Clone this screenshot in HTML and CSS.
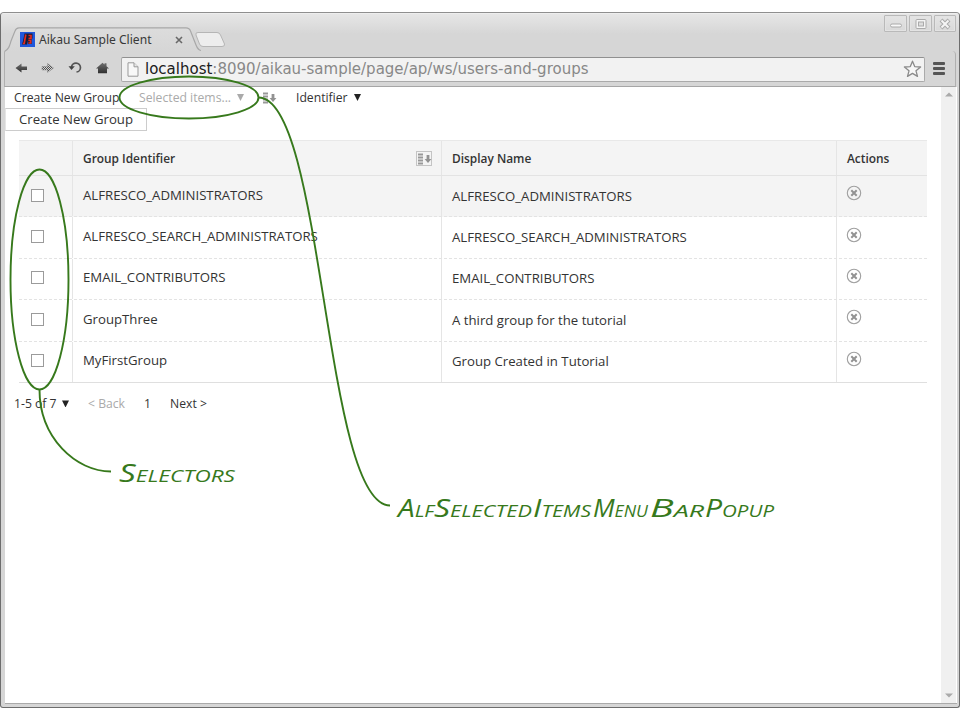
FILE: index.html
```html
<!DOCTYPE html>
<html lang="en">
<head>
<meta charset="utf-8">
<title>Aikau Sample Client</title>
<link rel="stylesheet" href="styles.css">
</head>
<body>
<svg class="defs" width="0" height="0">
  <symbol id="sort" viewBox="0 0 14 12"><path d="M0 1.500h5M0 4.500h5M0 7.500h5M0 10.500h5" stroke="#999" stroke-width="1.800"/><path d="M10 2v5" stroke="#929292" stroke-width="2.800"/><path d="M6.600 6h6.800L10 10z" fill="#929292"/></symbol>
  <symbol id="remove" viewBox="0 0 16 16"><circle cx="8" cy="8" r="6.700" fill="none" stroke="#a0a0a0" stroke-width="1.100"/><path d="M5.300 5.300l5.400 5.400M10.700 5.300l-5.400 5.400" stroke="#929292" stroke-width="2"/></symbol>
</svg>
<div class="window">
  <header class="titlebar">
    <svg class="tabshape" width="230" height="25" viewBox="0 0 230 25">
      <defs><linearGradient id="tg" x1="0" y1="0" x2="0" y2="1"><stop offset="0" stop-color="#dcdcdc"/><stop offset="1" stop-color="#d6d6d6"/></linearGradient></defs>
      <path d="M3.500 24.500C8 22 8.500 19 10 14L14 4Q15 .8 18 .8H185Q188.500 .8 189.500 4L195 18Q197 23 201 23.500V25H3z" fill="url(#tg)"/>
      <path d="M3.500 24.500C8 22 8.500 19 10 14L14 4Q15 .8 18 .8H185Q188.500 .8 189.500 4L195 18Q197 23 200 23.500" fill="none" stroke="#a8a8a8" stroke-width="1.200"/>
      <path d="M195 8Q194 5.500 197 5.500H216Q218.500 5.500 219.500 8L223.500 17Q224 19.500 221 19.500H202Q199.500 19.500 198.500 17z" fill="#ededed" stroke="#b5b5b5"/>
    </svg>
    <div class="tab">
      <svg width="15" height="15" viewBox="0 0 15 15"><rect width="15" height="15" fill="#2158dc"/><path d="M4.500 1.500h8v4.800l-.8 1V12H8V8.500L7 12.500H2L3 9z" fill="#141c38"/><path d="M5.800 2.500L4.200 11.500H2.800M8.500 3.500h2.500v2.800H8.500M8.300 8.500h2.400v2.500H8.300" stroke="#e02b20" stroke-width="1.700" fill="none"/></svg>
      <span class="tabname">Aikau Sample Client</span>
      <svg class="tabclose" width="8" height="8" viewBox="0 0 8 8"><path d="M1 1l6 6M7 1L1 7" stroke="#686868" stroke-width="1.600"/></svg>
    </div>
    <div class="controls">
      <span class="ctl"><svg width="14" height="12"><rect x="1.500" y="6" width="11" height="3" rx="1.500" fill="#f8f8f8" stroke="#aaa"/></svg></span>
      <span class="ctl"><svg width="14" height="12"><rect x="2" y="1.500" width="10" height="9" rx="1" fill="#f4f4f4" stroke="#aaa"/><rect x="4.500" y="4" width="5" height="4" fill="#ddd" stroke="#aaa"/></svg></span>
      <span class="ctl"><svg width="14" height="12"><path d="M3 2l8 8M11 2l-8 8" stroke="#aaa" stroke-width="4"/><path d="M3.500 2.500l7 7M10.500 2.500l-7 7" stroke="#f5f5f5" stroke-width="2"/></svg></span>
    </div>
  </header>
  <nav class="toolbar">
    <svg width="118" height="36" viewBox="0 0 118 36">
      <defs><linearGradient id="ig" x1="0" y1="0" x2="0" y2="1"><stop offset="0" stop-color="#707070"/><stop offset="1" stop-color="#303030"/></linearGradient>
      <pattern id="dots" width="2" height="2" patternUnits="userSpaceOnUse"><rect width="1" height="1" fill="#505050"/><rect x="1" y="1" width="1" height="1" fill="#505050"/></pattern></defs>
      <path d="M10.500 17l6-4.500v3h5.500v3.500h-5.500V21.500z" fill="url(#ig)"/>
      <path d="M48.500 17l-6-4.500v3h-5.500v3.500h5.500V21.500z" fill="url(#dots)" stroke="#888" stroke-width=".5"/>
      <path d="M66.500 16a4.500 4.500 0 1 1 5 5" fill="none" stroke="#555" stroke-width="1.700"/><path d="M63.500 15.200h6.300L66.500 19z" fill="#444"/>
      <path d="M91 17.500l6.500-5.700 2 1.700v-1.200h2v3L104 17.500h-2v4.700h-9v-4.700z" fill="url(#ig)"/>
    </svg>
    <div class="address">
      <svg width="12" height="15" viewBox="0 0 12 15"><path d="M1 .8h6l4 4v9.400H1z" fill="#f8f8f8" stroke="#999"/><path d="M7 .8v4h4" fill="#e8e8e8" stroke="#999"/></svg>
      <span class="url"><b>localhost</b>:8090/aikau-sample/page/ap/ws/users-and-groups</span>
      <svg class="star" width="19" height="18" viewBox="0 0 19 18"><path d="M9.500 1.200L11.700 6.600 17.600 7 13 10.800 14.500 16.400 9.500 13.400 4.500 16.400 6 10.800 1.400 7 7.300 6.600z" fill="#f7f7f7" stroke="#8a8a8a" stroke-width="1.300" stroke-linejoin="round"/></svg>
    </div>
    <div class="burger"><i></i><i></i><i></i></div>
  </nav>
  <div class="viewport">
    <main class="page">
      <div class="menubar">
        <span class="m1">Create New Group</span>
        <span class="m2">Selected items...</span><span class="caret dim"></span>
        <svg class="sorticon" width="14" height="12"><use href="#sort"/></svg>
        <span class="m3">Identifier</span><span class="caret"></span>
      </div>
      <div class="popup"><span>Create New Group</span></div>
      <div class="table">
        <div class="row head"><div class="c"></div><div class="c name"><span class="h1">Group Identifier</span><span class="sortbox"><svg width="14" height="12"><use href="#sort"/></svg></span></div><div class="c"><span>Display Name</span></div><div class="c"><span>Actions</span></div></div>
        <div class="row hover"><div class="c"><i class="box"></i></div><div class="c"><span>ALFRESCO_ADMINISTRATORS</span></div><div class="c disp"><span>ALFRESCO_ADMINISTRATORS</span></div><div class="c act"><svg width="16" height="16"><use href="#remove"/></svg></div></div>
        <div class="row"><div class="c"><i class="box"></i></div><div class="c"><span>ALFRESCO_SEARCH_ADMINISTRATORS</span></div><div class="c disp"><span>ALFRESCO_SEARCH_ADMINISTRATORS</span></div><div class="c act"><svg width="16" height="16"><use href="#remove"/></svg></div></div>
        <div class="row"><div class="c"><i class="box"></i></div><div class="c"><span>EMAIL_CONTRIBUTORS</span></div><div class="c disp"><span>EMAIL_CONTRIBUTORS</span></div><div class="c act"><svg width="16" height="16"><use href="#remove"/></svg></div></div>
        <div class="row"><div class="c"><i class="box"></i></div><div class="c"><span>GroupThree</span></div><div class="c disp"><span>A third group for the tutorial</span></div><div class="c act"><svg width="16" height="16"><use href="#remove"/></svg></div></div>
        <div class="row last"><div class="c"><i class="box"></i></div><div class="c"><span>MyFirstGroup</span></div><div class="c disp"><span>Group Created in Tutorial</span></div><div class="c act"><svg width="16" height="16"><use href="#remove"/></svg></div></div>
      </div>
      <div class="pager"><span class="p1">1-5 of 7</span><span class="caret"></span><span class="p2">&lt; Back</span><span class="p3">1</span><span class="p4">Next &gt;</span></div>
    </main>
    <aside class="scroll"><svg width="8" height="5"><path d="M0 4.500L4 .5l4 4z" fill="#aaa"/></svg><svg width="8" height="5"><path d="M0 .5l4 4 4-4z" fill="#aaa"/></svg></aside>
  </div>
</div>
<svg class="notes" width="960" height="720" viewBox="0 0 960 720">
  <g fill="none" stroke="#37791c" stroke-width="1.900">
    <ellipse cx="189" cy="97.500" rx="69.500" ry="21"/>
    <ellipse cx="39.500" cy="279.500" rx="29" ry="110"/>
    <path d="M39.500 389.500C39.500 438 76 471.500 111 471.500"/>
    <path d="M258.500 97.500C324 97.500 324 505.500 390 505.500"/>
  </g>
  <g class="hand">
    <text x="119" y="482" textLength="116" lengthAdjust="spacingAndGlyphs"><tspan class="cap">S</tspan>ELECTORS</text>
    <text x="398" y="517" textLength="36" lengthAdjust="spacingAndGlyphs"><tspan class="cap">A</tspan>LF</text>
    <text x="434" y="517" textLength="98" lengthAdjust="spacingAndGlyphs"><tspan class="cap">S</tspan>ELECTED</text>
    <text x="533" y="517" textLength="58" lengthAdjust="spacingAndGlyphs"><tspan class="cap">I</tspan>TEMS</text>
    <text x="593" y="517" textLength="55" lengthAdjust="spacingAndGlyphs"><tspan class="cap">M</tspan>ENU</text>
    <text x="650" y="517" textLength="54" lengthAdjust="spacingAndGlyphs"><tspan class="cap">B</tspan>AR</text>
    <text x="705" y="517" textLength="69" lengthAdjust="spacingAndGlyphs"><tspan class="cap">P</tspan>OPUP</text>
  </g>
</svg>
</body>
</html>
```

FILE: styles.css
```css
* { box-sizing: border-box; }
body { margin: 0; width: 960px; height: 720px; padding-top: 12px; background: #fff; overflow: hidden; font-family: "Open Sans", sans-serif; color: #333; position: relative; }
svg { display: block; flex: none; }
.defs { position: absolute; }
.window { height: 696px; display: flex; flex-direction: column; background: #d6d6d6; border: 1px solid #6d6d6d; border-top-color: #8f8f8f; border-radius: 4px 4px 3px 3px; overflow: hidden; }
.titlebar { height: 38px; flex: none; display: flex; position: relative; background: linear-gradient(#e6e6e6, #d6d6d6 20px); border-top: 1px solid #eee; }
.tabshape { position: absolute; left: 0; top: 13px; }
.tab { position: relative; display: flex; align-items: center; height: 15px; margin: 18px 0 0 19px; width: 175px; }
.tabname { margin-left: 4px; font: 12.100px/15px "Noto Sans", sans-serif; width: 114px; white-space: nowrap; color: #383838; }
.tabclose { margin-left: 22px; }
.controls { margin-left: auto; display: flex; gap: 2px; padding: 1px 3px 0 0; }
.ctl { width: 23px; height: 17px; border: 1px solid #b9b9b9; border-radius: 1px; display: flex; align-items: center; justify-content: center; box-shadow: inset 0 0 0 1px #e3e3e3; }
.ctl:nth-child(3) { width: 22px; }
.toolbar { height: 36px; flex: none; display: flex; align-items: center; border: 1px solid #b0b0b0; border-top: 0; border-bottom: 1px solid #a6a6a6; margin: 0 3px; border-radius: 0 4px 0 0; }
.toolbar > svg { width: 118px; margin-right: -2px; }
.address { flex: none; width: 804px; height: 25px; margin-top: 1px; border: 1px solid #aaa; border-top-color: #909090; background: #f2f2f2; border-radius: 2px; display: flex; align-items: center; padding: 0 2px 0 5px; }
.url { margin-left: 6px; font: 15px/22px "DejaVu Sans", sans-serif; color: #888; white-space: nowrap; }
.url b { font-weight: 400; color: #202020; }
.star { margin-left: auto; }
.burger { width: 12px; margin-left: 8px; display: grid; gap: 2px; }
.burger i { height: 3px; background: #555; border-radius: 1px; }
.viewport { height: 617px; flex: none; margin: 0 2px 0 4px; display: flex; background: #fff; border-bottom: 1px solid #aaa; }
.page { flex: 1; min-width: 0; }
.scroll { width: 15px; margin-right: 1px; background: #f0f0f0; display: flex; flex-direction: column; justify-content: space-between; align-items: center; padding: 5px 0; }
.menubar { height: 21px; padding-left: 9px; display: flex; align-items: center; font-size: 12.200px; white-space: nowrap; }
.menubar .m1 { width: 125px; }
.menubar .m2 { width: 98px; color: #aaa; }
.menubar .m3 { width: 58px; }
.caret { width: 7px; height: 7px; background: #222; clip-path: polygon(0 0, 100% 0, 50% 100%); }
.caret.dim { background: #aaa; }
.sorticon { margin: 0 19px 0 19px; }
.popup { width: 142px; height: 23px; border: 1px solid #ccc; border-left-color: #e5e5e5; padding-left: 13px; font-size: 13.200px; line-height: 20px; white-space: nowrap; }
.table { width: 908px; margin: 9px 0 0 14px; font-size: 13.200px; }
.row { display: grid; grid-template-columns: 54px 369px 395px 90px; height: 41.400px; border-bottom: 1px dashed #e3e3e3; }
.c { border-right: 1px solid #e5e5e5; padding-left: 10px; display: flex; align-items: center; padding-bottom: 3px; white-space: nowrap; min-width: 0; }
.c:last-child { border-right: 0; }
.c:first-child { padding-left: 12px; padding-bottom: 2px; }
.head { height: 36px; background: #f4f4f4; border-top: 1px solid #e8e8e8; border-bottom: 1px solid #e3e3e3; font-weight: 600; font-size: 11.900px; }
.head .c { padding-bottom: 0; }
.name { justify-content: space-between; padding-right: 9px; }
.sortbox { border: 1px solid #c4c4c4; padding: 1px 0 0 1px; width: 16px; height: 15px; display: flex; }
.hover { background: #f4f4f4; }
.last { border-bottom: 1px solid #dfdfdf; }
.box { width: 13px; height: 13px; border: 1px solid #9b9b9b; background: #fff; }
.disp { padding-bottom: 1px; }
.act { padding: 0 0 6px 9px; }
.pager { display: flex; align-items: center; margin: 12px 0 0 9px; height: 18px; font-size: 12.200px; white-space: nowrap; }
.p1 { width: 48px; }
.p2 { color: #aaa; width: 56px; margin-left: 19px; }
.p3 { width: 26px; }
.notes { position: absolute; inset: 0; }
.hand { font-family: "Open Sans", sans-serif; font-style: italic; font-weight: 400; font-size: 17px; fill: #37791c; }
.cap { font-size: 25px; }
```
